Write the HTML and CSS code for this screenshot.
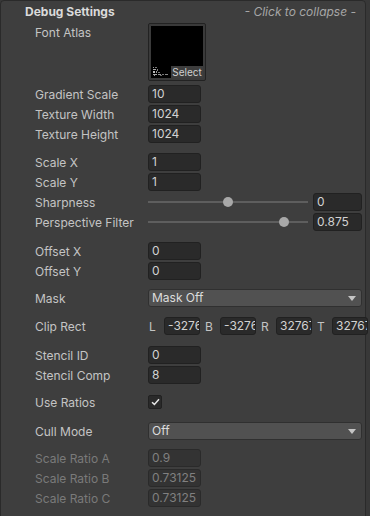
FILE: index.html
```html
<!DOCTYPE html>
<html lang="en">
<head>
  <meta charset="UTF-8">
  <title>Debug Settings</title>
  <link rel="stylesheet" href="styles.css">
</head>
<body>
  <div class="panel">
    <div class="header">
      <span class="title">Debug Settings</span>
      <span class="collapse">- Click to collapse -</span>
    </div>

    <div class="rows">
      <div class="row atlas-row">
        <label class="label">Font Atlas</label>
        <div class="atlas">
          <div class="atlas-inner">
            <svg class="glyphs" width="22" height="10" viewBox="0 0 22 10">
              <rect x="1" y="0" width="1" height="1" fill="#9a9a9a"/>
              <rect x="3" y="0" width="2" height="1" fill="#777"/>
              <rect x="1" y="2" width="3" height="1" fill="#aaa"/>
              <rect x="5" y="2" width="1" height="2" fill="#888"/>
              <rect x="1" y="4" width="2" height="2" fill="#bbb"/>
              <rect x="4" y="4" width="1" height="2" fill="#999"/>
              <rect x="6" y="5" width="2" height="1" fill="#777"/>
              <rect x="1" y="7" width="4" height="1" fill="#aaa"/>
              <rect x="6" y="7" width="3" height="1" fill="#999"/>
              <rect x="10" y="7" width="2" height="1" fill="#777"/>
              <rect x="13" y="7" width="3" height="1" fill="#888"/>
              <rect x="2" y="8" width="1" height="1" fill="#999"/>
              <rect x="8" y="8" width="2" height="1" fill="#666"/>
            </svg>
            <span class="select">Select</span>
          </div>
        </div>
      </div>

      <div class="row mt4"><label class="label">Gradient Scale</label><div class="field">10</div></div>
      <div class="row"><label class="label">Texture Width</label><div class="field">1024</div></div>
      <div class="row"><label class="label">Texture Height</label><div class="field">1024</div></div>

      <div class="row mt10"><label class="label">Scale X</label><div class="field">1</div></div>
      <div class="row"><label class="label">Scale Y</label><div class="field">1</div></div>
      <div class="row">
        <label class="label">Sharpness</label>
        <div class="slider"><div class="knob" style="left: 75px"></div></div>
        <div class="field slider-field">0</div>
      </div>
      <div class="row">
        <label class="label">Perspective Filter</label>
        <div class="slider"><div class="knob" style="left: 131px"></div></div>
        <div class="field slider-field">0.875</div>
      </div>

      <div class="row mt11"><label class="label">Offset X</label><div class="field">0</div></div>
      <div class="row"><label class="label">Offset Y</label><div class="field">0</div></div>

      <div class="row mt9">
        <label class="label">Mask</label>
        <div class="dropdown">Mask Off<span class="arrow"></span></div>
      </div>

      <div class="row mt10">
        <label class="label">Clip Rect</label>
        <div class="clip">
          <span class="clip-key">L</span><div class="field clip-field">-32767</div>
          <span class="clip-key">B</span><div class="field clip-field">-32767</div>
          <span class="clip-key">R</span><div class="field clip-field">32767</div>
          <span class="clip-key">T</span><div class="field clip-field">32767</div>
        </div>
      </div>

      <div class="row mt11"><label class="label">Stencil ID</label><div class="field">0</div></div>
      <div class="row"><label class="label">Stencil Comp</label><div class="field">8</div></div>

      <div class="row mt9">
        <label class="label">Use Ratios</label>
        <div class="checkbox">
          <svg width="9" height="8" viewBox="0 0 9 8"><path d="M1 4.2 L3.4 6.4 L8 1.2" fill="none" stroke="#e6e6e6" stroke-width="1.5"/></svg>
        </div>
      </div>

      <div class="row mt11">
        <label class="label">Cull Mode</label>
        <div class="dropdown">Off<span class="arrow"></span></div>
      </div>

      <div class="row mt9 disabled"><label class="label">Scale Ratio A</label><div class="field">0.9</div></div>
      <div class="row disabled"><label class="label">Scale Ratio B</label><div class="field">0.73125</div></div>
      <div class="row disabled"><label class="label">Scale Ratio C</label><div class="field">0.73125</div></div>
    </div>
  </div>
</body>
</html>
```

FILE: styles.css
```css
html, body { margin: 0; height: 516px; overflow: hidden; background: #383838; }
body { font-family: Inter, "Noto Sans", sans-serif; font-size: 12px; color: #c4c4c4; }

.panel { width: 364px; height: 560px; background: #3e3e3e; border: 1px solid #2a2a2a; border-radius: 4px 4px 0 0; }

.header { display: flex; justify-content: space-between; height: 22px; line-height: 22px; padding: 0 9px 0 24px; }
.title { font-weight: bold; color: #dadada; }
.collapse { font-style: italic; color: #a6a6a6; }

.rows { padding-left: 34px; }
.row { display: flex; align-items: center; height: 18px; margin-top: 2px; }
.label { width: 113px; flex: none; white-space: nowrap; }

.mt4 { margin-top: 4px; }
.mt9 { margin-top: 9px; }
.mt10 { margin-top: 10px; }
.mt11 { margin-top: 11px; }

.field { box-sizing: border-box; width: 53px; height: 18px; line-height: 16px; padding: 0 3px; background: #2a2a2a; border: 1px solid #212121; border-radius: 3px; color: #d2d2d2; overflow: hidden; white-space: nowrap; }

.atlas-row { height: 58px; align-items: flex-start; margin-top: 0; }
.atlas-row .label { line-height: 20px; }
.atlas { box-sizing: border-box; width: 58px; height: 58px; padding: 2px; background: #3a3a3a; border: 1px solid #222; border-radius: 2px; }
.atlas-inner { position: relative; height: 100%; background: #000; }
.glyphs { position: absolute; left: 1px; bottom: 1px; }
.select { position: absolute; right: 0; bottom: 0; width: 32px; height: 12px; line-height: 12px; font-size: 10px; text-align: center; background: #3d3d3d; color: #cfcfcf; }

.slider { position: relative; width: 160px; height: 18px; margin-right: 5px; }
.slider::before { content: ""; position: absolute; left: 0; right: 0; top: 8px; height: 2px; background: #5e5e5e; }
.knob { position: absolute; top: 4px; width: 10px; height: 10px; border-radius: 50%; background: #a8a8a8; }
.slider-field { width: 49px; }

.dropdown { position: relative; box-sizing: border-box; width: 214px; height: 18px; line-height: 16px; padding: 0 3px; background: #515151; border: 1px solid #303030; border-radius: 3px; color: #dcdcdc; }
.arrow { position: absolute; right: 5px; top: 6px; border-left: 4px solid transparent; border-right: 4px solid transparent; border-top: 5px solid #c4c4c4; }

.clip { display: flex; align-items: center; }
.clip-key { width: 15px; padding-left: 1px; }
.clip-field { width: 36px; padding: 0 3px; margin-right: 4px; }
.clip-field:last-child { margin-right: 0; }

.checkbox { box-sizing: border-box; width: 14px; height: 14px; background: #2a2a2a; border: 1px solid #212121; border-radius: 2px; display: flex; align-items: center; justify-content: center; }

.disabled .label { color: #7a7a7a; }
.disabled .field { background: #333; border-color: #2a2a2a; color: #808080; }
```
